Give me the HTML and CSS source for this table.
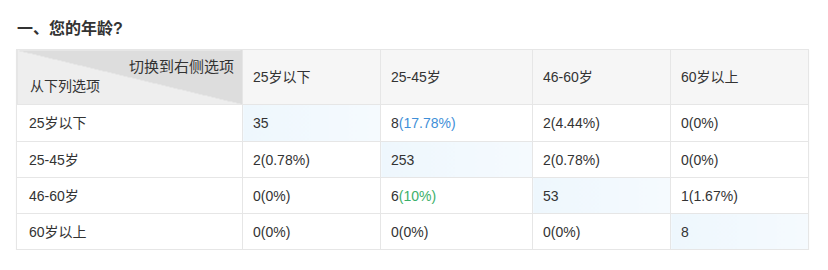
FILE: index.html
```html
<!DOCTYPE html>
<html lang="zh-CN">
<head>
<meta charset="utf-8">
<title>您的年龄</title>
<link rel="stylesheet" href="styles.css">
</head>
<body>
<div class="wrap">
  <h2 class="title">一、您的年龄?</h2>
  <table class="cross">
    <colgroup>
      <col class="c1"><col class="c2"><col class="c3"><col class="c4"><col class="c5">
    </colgroup>
    <thead>
      <tr>
        <th class="diag">
          <div class="diag-top">切换到右侧选项</div>
          <div class="diag-bottom">从下列选项</div>
        </th>
        <th>25岁以下</th>
        <th>25-45岁</th>
        <th>46-60岁</th>
        <th>60岁以上</th>
      </tr>
    </thead>
    <tbody>
      <tr class="r1">
        <td class="rowhead">25岁以下</td>
        <td class="self">35</td>
        <td>8<span class="blue">(17.78%)</span></td>
        <td>2(4.44%)</td>
        <td>0(0%)</td>
      </tr>
      <tr>
        <td class="rowhead">25-45岁</td>
        <td>2(0.78%)</td>
        <td class="self">253</td>
        <td>2(0.78%)</td>
        <td>0(0%)</td>
      </tr>
      <tr>
        <td class="rowhead">46-60岁</td>
        <td>0(0%)</td>
        <td>6<span class="green">(10%)</span></td>
        <td class="self">53</td>
        <td>1(1.67%)</td>
      </tr>
      <tr>
        <td class="rowhead">60岁以上</td>
        <td>0(0%)</td>
        <td>0(0%)</td>
        <td>0(0%)</td>
        <td class="self">8</td>
      </tr>
    </tbody>
  </table>
</div>
</body>
</html>
```
FILE: styles.css
```css
html, body {
  margin: 0;
  padding: 0;
  background: #ffffff;
}
body {
  font-family: "Liberation Sans", "Noto Sans CJK SC", sans-serif;
  color: #333333;
  font-size: 14px;
}
.wrap {
  padding: 18px 20px 0 16px;
}
.title {
  margin: 0 0 9px 1px;
  font-size: 16px;
  line-height: 22px;
  font-weight: bold;
  color: #333333;
}
.cross {
  width: 792px;
  border-collapse: collapse;
  table-layout: fixed;
  border: 1px solid #e6e6e6;
  box-shadow: 0 1px 1px rgba(0, 0, 0, 0.05);
}
.c1 { width: 226px; }
.c2 { width: 138px; }
.c3 { width: 152px; }
.c4 { width: 138px; }
.c5 { width: 138px; }
.cross th,
.cross td {
  border: 1px solid #e6e6e6;
  text-align: left;
  font-weight: normal;
  padding: 0 10px;
  line-height: 20px;
}
.cross th {
  height: 54px;
  background: #f6f6f6;
}
.cross td {
  height: 35px;
}
.cross .r1 td {
  height: 36px;
}
.cross .rowhead {
  padding-left: 12px;
}
.cross th.diag {
  padding: 0 8px 0 13px;
  background: linear-gradient(to top right, #eeeeee 50%, #dddddd 50%);
  vertical-align: top;
}
.diag-top {
  text-align: right;
  font-size: 15px;
  margin-top: 7px;
  line-height: 20px;
}
.diag-bottom {
  text-align: left;
  line-height: 20px;
  margin-top: -1px;
}
.cross td.self {
  background: linear-gradient(to right, #eef7fd, #f5fafe);
}
.blue {
  color: #3f8fd8;
}
.green {
  color: #3cb06a;
}
```
